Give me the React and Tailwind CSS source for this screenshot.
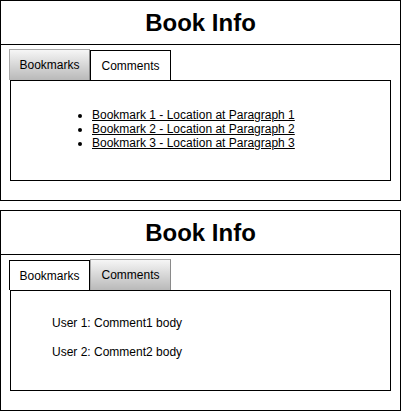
import React from "react";

const bookmarks = [
  "Bookmark 1 - Location at Paragraph 1",
  "Bookmark 2 - Location at Paragraph 2",
  "Bookmark 3 - Location at Paragraph 3",
];

const comments = [
  { user: "User 1", body: "Comment1 body" },
  { user: "User 2", body: "Comment2 body" },
];

function Tab({ label, active }) {
  if (active) {
    return (
      <div className="w-[81px] h-[31px] flex items-center justify-center border border-b-0 border-[#a8a8a8] border-r-[#8a8a8a] bg-gradient-to-b from-[#f6f6f6] to-[#b9b9b9] text-[12px] text-black">
        {label}
      </div>
    );
  }
  return (
    <div className="w-[81px] h-[30px] flex items-center justify-center border border-b-0 border-black bg-white text-[12px] text-black">
      {label}
    </div>
  );
}

function BookInfo({ tab }) {
  return (
    <div className="w-[401px] h-[201px] border border-black bg-white mb-[9px]">
      <div className="h-[44px] border-b border-black flex items-center justify-center pt-[1px]">
        <h1 className="text-[24px] font-bold leading-none">Book Info</h1>
      </div>
      <div className="pt-[4px] pl-[8px]">
        <div className="flex items-end h-[31px]">
          <Tab label="Bookmarks" active={tab === "bookmarks"} />
          <Tab label="Comments" active={tab === "comments"} />
        </div>
        <div className="w-[381px] h-[101px] ml-px border border-black">
          {tab === "bookmarks" ? (
            <ul className="list-disc pl-[81px] pt-[27px] text-[12px] leading-[14px]">
              {bookmarks.map((b) => (
                <li key={b}>
                  <a href="#" className="underline text-black">
                    {b}
                  </a>
                </li>
              ))}
            </ul>
          ) : (
            <div className="pl-[41px] pt-[25px] text-[12px] leading-[14px] space-y-[15px]">
              {comments.map((c) => (
                <p key={c.user}>
                  {c.user}: {c.body}
                </p>
              ))}
            </div>
          )}
        </div>
      </div>
    </div>
  );
}

export default function App() {
  return (
    <div className="w-[402px] h-[414px] bg-white text-black font-['Liberation_Sans',Arial,sans-serif]">
      <BookInfo tab="bookmarks" />
      <BookInfo tab="comments" />
    </div>
  );
}
